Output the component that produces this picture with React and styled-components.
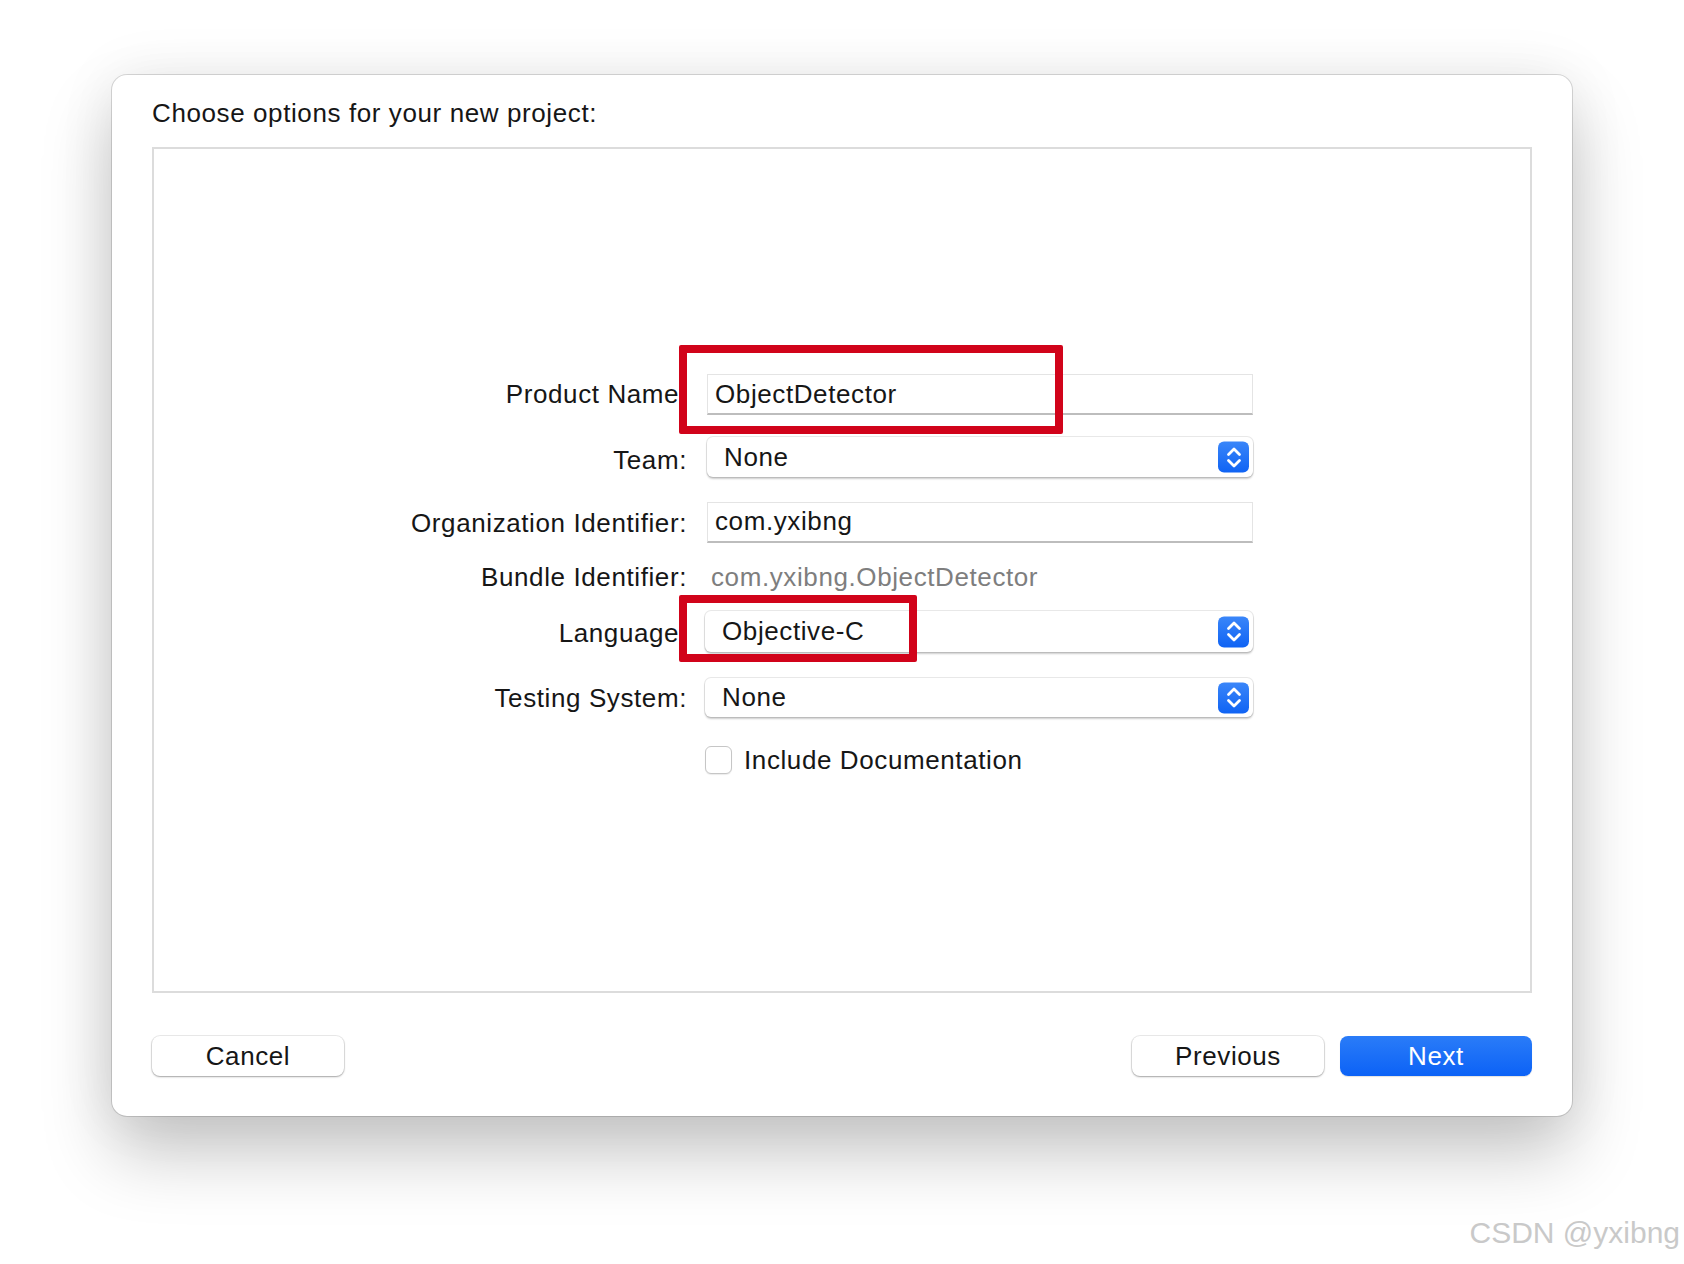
import React from "react";
import styled, { createGlobalStyle } from "styled-components";

const GlobalStyle = createGlobalStyle`
  html, body {
    margin: 0;
    padding: 0;
    background: #ffffff;
  }
  body {
    font-family: "Liberation Sans", Arial, sans-serif;
    color: #161616;
  }
`;

const Page = styled.div`
  position: relative;
  width: 1684px;
  height: 1264px;
  overflow: hidden;
  box-sizing: border-box;
  padding: 75px 0 0 112px;
`;

const Window = styled.div`
  width: 1460px;
  height: 1041px;
  box-sizing: border-box;
  padding: 0 40px;
  background: #fff;
  border-radius: 15px;
  box-shadow: 0 0 0 1px rgba(0, 0, 0, 0.14), 0 38px 70px rgba(0, 0, 0, 0.22),
    0 0 60px rgba(0, 0, 0, 0.07);
  display: flex;
  flex-direction: column;
`;

const Title = styled.div`
  padding-top: 22px;
  height: 50px;
  line-height: 32px;
  font-size: 26px;
  letter-spacing: 0.6px;
`;

const Panel = styled.div`
  position: relative;
  height: 846px;
  box-sizing: border-box;
  border: 2px solid #dcdcdc;
  padding: 225px 0 0 233px;
`;

const Form = styled.div`
  display: grid;
  grid-template-columns: 300px 548px;
  column-gap: 18px;
`;

const Label = styled.div`
  grid-column: 1;
  margin-top: ${(p) => p.top || 0}px;
  height: ${(p) => p.h || 40}px;
  display: flex;
  align-items: center;
  justify-content: flex-end;
  padding-top: ${(p) => p.shift || 0}px;
  box-sizing: border-box;
  font-size: 26px;
  letter-spacing: 0.6px;
  white-space: nowrap;
`;

const Cell = styled.div`
  grid-column: 2;
  margin-top: ${(p) => p.top || 0}px;
  height: ${(p) => p.h || 40}px;
  display: flex;
  align-items: center;
`;

const TextField = styled.div`
  margin-left: 2px;
  width: 546px;
  height: 41px;
  box-sizing: border-box;
  border: 1px solid #e4e4e4;
  border-bottom: 2px solid #bdbdbd;
  padding-left: 7px;
  display: flex;
  align-items: center;
  font-size: 26px;
  letter-spacing: 0.6px;
`;

const Popup = styled.div`
  position: relative;
  margin-left: ${(p) => p.inset || 0}px;
  width: ${(p) => 548 - (p.inset || 0)}px;
  height: ${(p) => p.h || 39}px;
  box-sizing: border-box;
  border-radius: 6px;
  background: #fff;
  box-shadow: 0 0 0 1px rgba(0, 0, 0, 0.09), 0 2px 2px rgba(0, 0, 0, 0.2);
  padding-left: 17px;
  display: flex;
  align-items: center;
  font-size: 26px;
  letter-spacing: 0.6px;
`;

const Stepper = styled.div`
  position: absolute;
  right: 4px;
  top: 50%;
  transform: translateY(-50%);
  width: 31px;
  height: 31px;
  border-radius: 6px;
  background: linear-gradient(#3a86f9, #0f63f4);
  display: flex;
  align-items: center;
  justify-content: center;
`;

const Value = styled.div`
  padding-left: 6px;
  font-size: 26px;
  letter-spacing: 0.6px;
  color: #7e7e7e;
`;

const CheckRow = styled.label`
  display: flex;
  align-items: center;
  gap: 12px;
  font-size: 26px;
  letter-spacing: 0.6px;
`;

const CheckBox = styled.span`
  width: 27px;
  height: 28px;
  box-sizing: border-box;
  border: 1px solid #c6c6c6;
  border-radius: 6px;
  background: #fff;
  box-shadow: 0 1px 1px rgba(0, 0, 0, 0.08);
`;

const Highlight = styled.div`
  position: absolute;
  left: ${(p) => p.x}px;
  top: ${(p) => p.y}px;
  width: ${(p) => p.w}px;
  height: ${(p) => p.h}px;
  box-sizing: border-box;
  border: 8px solid #d1031a;
  border-radius: 2px;
  pointer-events: none;
`;

const Footer = styled.div`
  padding-top: 43px;
  display: flex;
  align-items: center;
  gap: 16px;
`;

const Spacer = styled.div`
  flex: 1;
`;

const Button = styled.button`
  width: 192px;
  height: 40px;
  border: none;
  border-radius: 8px;
  font-family: "Liberation Sans", Arial, sans-serif;
  font-size: 26px;
  letter-spacing: 0.6px;
  color: ${(p) => (p.primary ? "#fff" : "#161616")};
  background: ${(p) =>
    p.primary ? "linear-gradient(#2a7cf8, #0c62f6)" : "#fff"};
  box-shadow: ${(p) =>
    p.primary
      ? "0 1px 1px rgba(0,0,0,0.12)"
      : "0 0 0 1px rgba(0,0,0,0.08), 0 1px 2px rgba(0,0,0,0.3)"};
  padding: 0;
`;

const Watermark = styled.div`
  position: absolute;
  right: 4px;
  bottom: 14px;
  font-family: "Liberation Sans", Arial, sans-serif;
  font-size: 30px;
  color: #c9c9c9;
  text-shadow: 0 1px 1px rgba(255, 255, 255, 0.9);
`;

const Arrows = () => (
  <svg width="20" height="26" viewBox="0 0 20 26" fill="none">
    <path
      d="M4.5 10 L10 4.5 L15.5 10"
      stroke="#fff"
      strokeWidth="2.8"
      strokeLinecap="round"
      strokeLinejoin="round"
    />
    <path
      d="M4.5 16 L10 21.5 L15.5 16"
      stroke="#fff"
      strokeWidth="2.8"
      strokeLinecap="round"
      strokeLinejoin="round"
    />
  </svg>
);

const Select = ({ children, h, inset }) => (
  <Popup h={h} inset={inset}>
    {children}
    <Stepper>
      <Arrows />
    </Stepper>
  </Popup>
);

export default function App() {
  return (
    <>
      <GlobalStyle />
      <Page>
        <Window>
          <Title>Choose options for your new project:</Title>
          <Panel>
            <Form>
              <Label h={41}>Product Name:</Label>
              <Cell h={41}>
                <TextField>ObjectDetector</TextField>
              </Cell>

              <Label top={22} h={40} shift={6}>
                Team:
              </Label>
              <Cell top={22} h={40}>
                <Select h={40} inset={2}>
                  None
                </Select>
              </Cell>

              <Label top={25} h={40} shift={2}>
                Organization Identifier:
              </Label>
              <Cell top={25} h={40}>
                <TextField>com.yxibng</TextField>
              </Cell>

              <Label top={15} h={40}>
                Bundle Identifier:
              </Label>
              <Cell top={15} h={40}>
                <Value>com.yxibng.ObjectDetector</Value>
              </Cell>

              <Label top={14} h={41} shift={4}>
                Language:
              </Label>
              <Cell top={14} h={41}>
                <Select h={41}>Objective-C</Select>
              </Cell>

              <Label top={26} h={39} shift={2}>
                Testing System:
              </Label>
              <Cell top={26} h={39}>
                <Select h={39}>None</Select>
              </Cell>

              <Cell top={23} h={40}>
                <CheckRow>
                  <CheckBox />
                  Include Documentation
                </CheckRow>
              </Cell>
            </Form>
            <Highlight x={525} y={196} w={384} h={89} />
            <Highlight x={525} y={446} w={238} h={67} />
          </Panel>
          <Footer>
            <Button>Cancel</Button>
            <Spacer />
            <Button>Previous</Button>
            <Button primary>Next</Button>
          </Footer>
        </Window>
        <Watermark>CSDN @yxibng</Watermark>
      </Page>
    </>
  );
}
